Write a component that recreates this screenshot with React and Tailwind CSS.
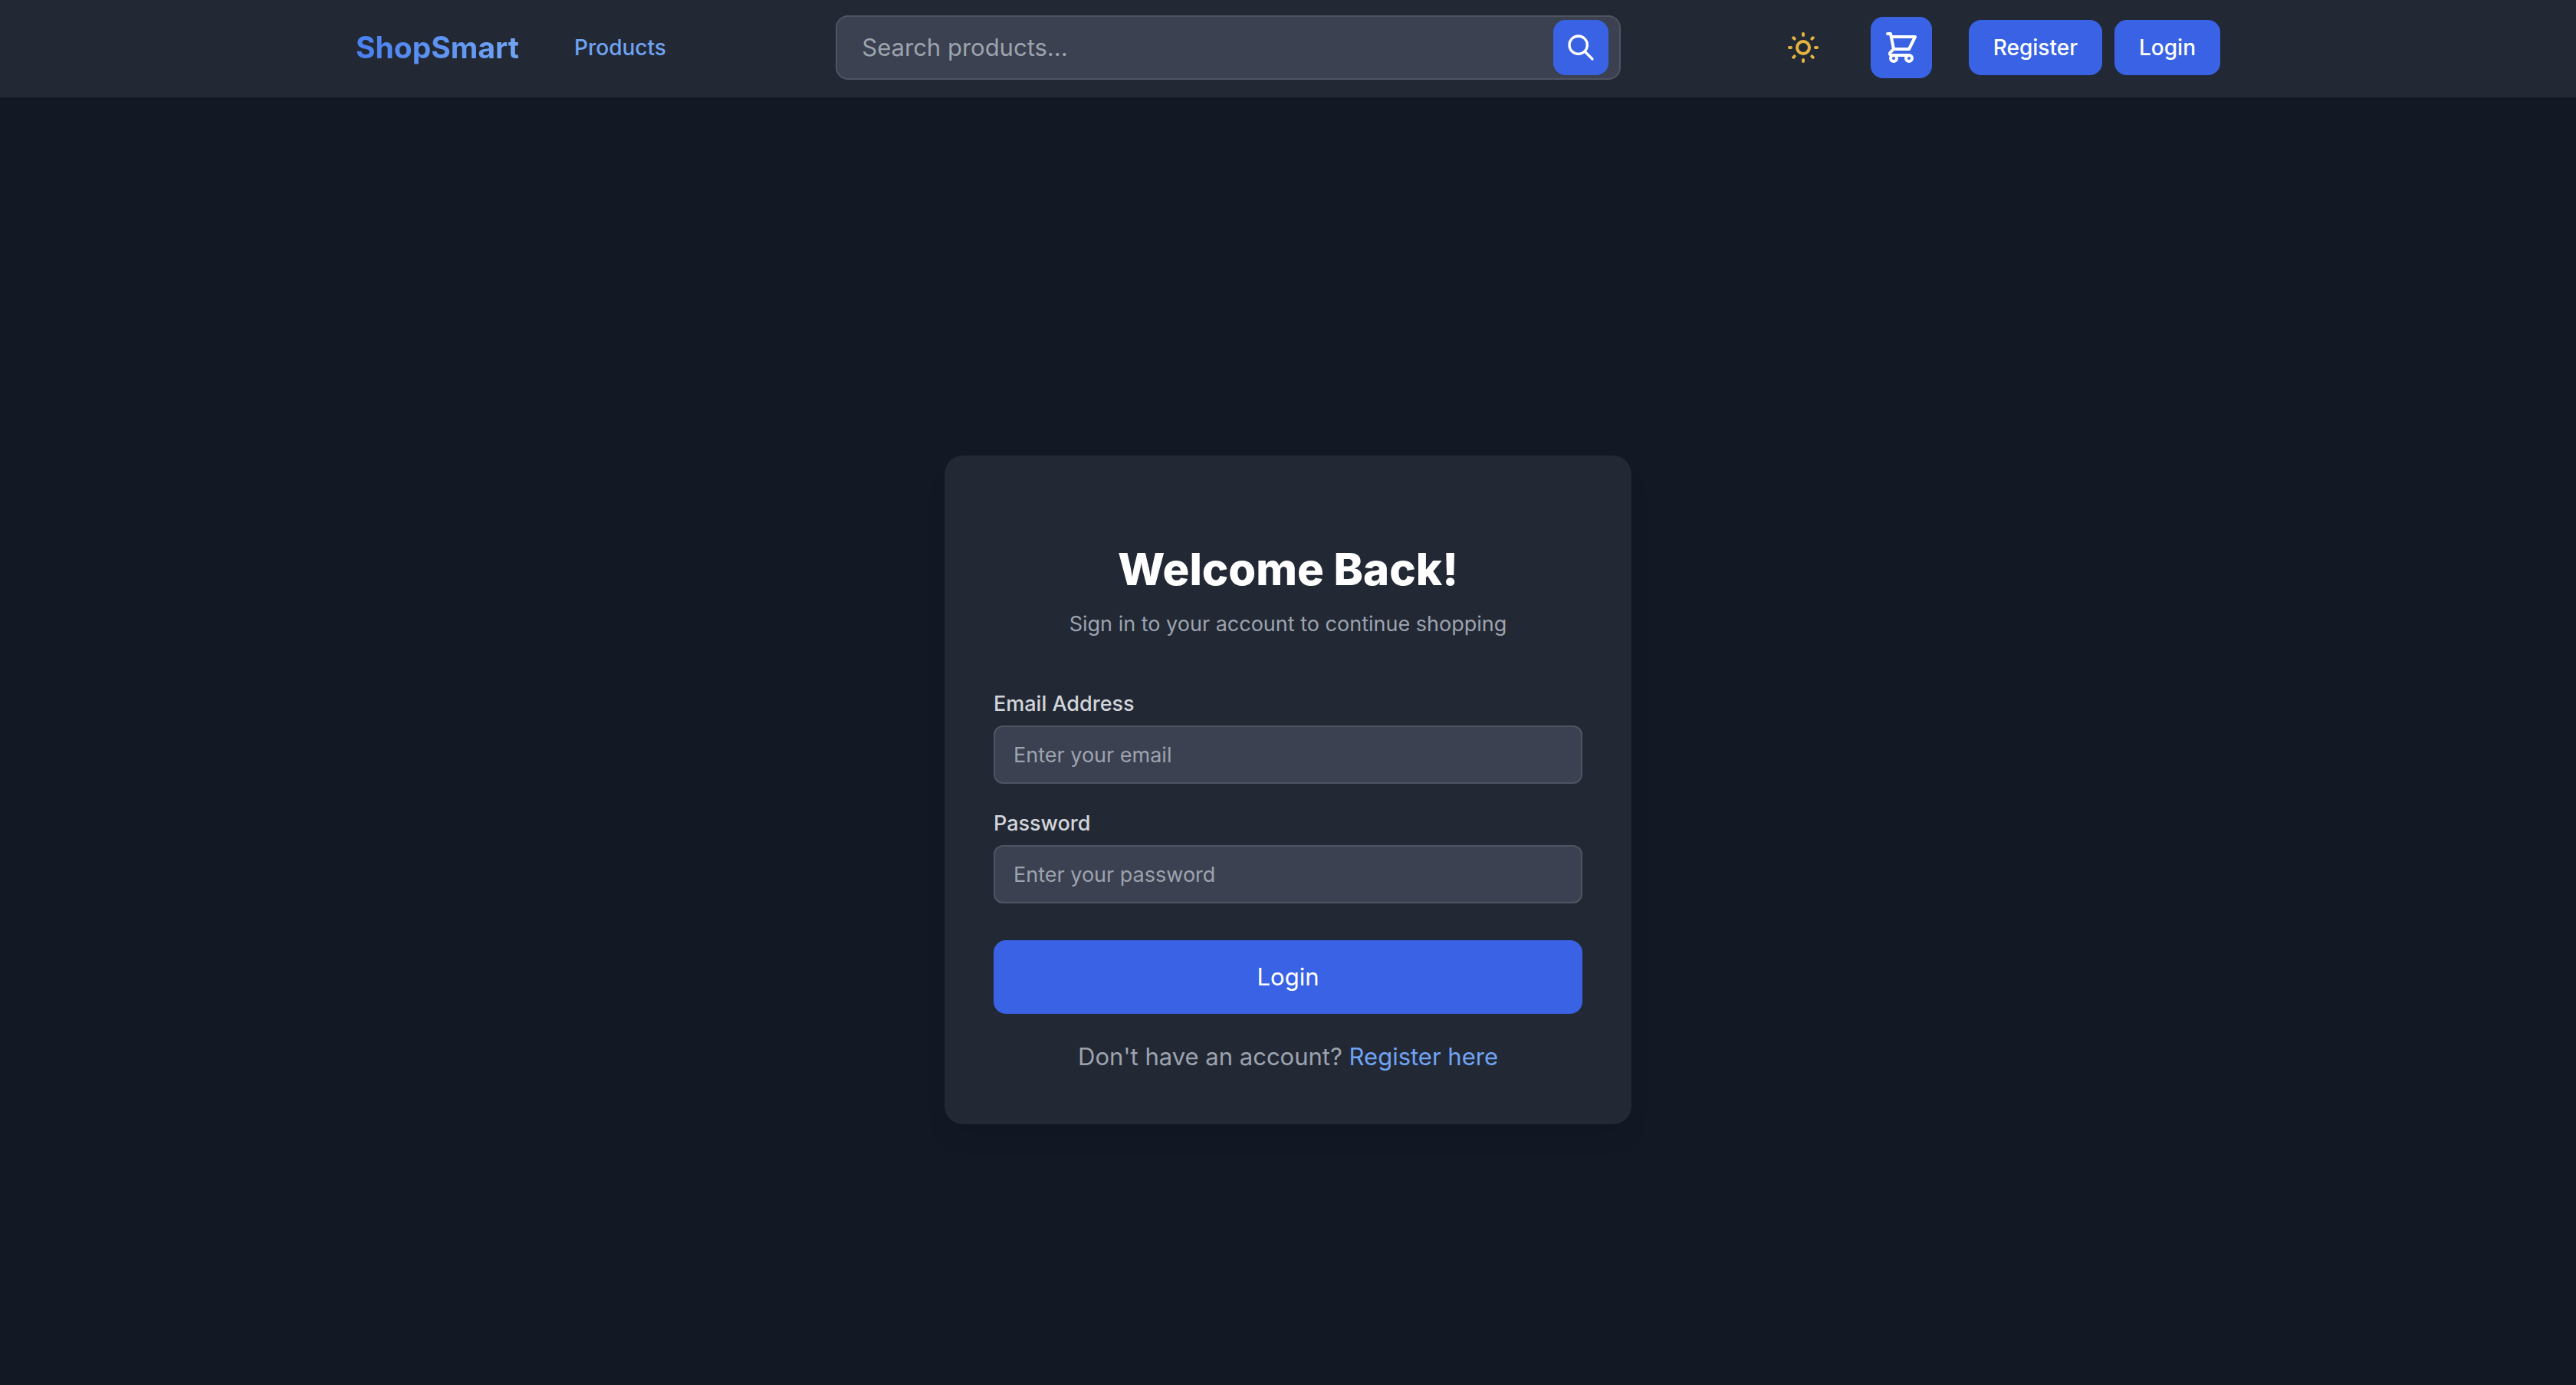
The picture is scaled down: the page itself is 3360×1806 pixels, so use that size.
import React from "react";

const links = [{ label: "Products", href: "#products" }];

function SearchIcon() {
  return (
    <svg className="size-10" viewBox="0 0 24 24" fill="none" stroke="currentColor" strokeWidth="2" strokeLinecap="round" strokeLinejoin="round" aria-hidden="true">
      <path d="M21 21l-6-6m2-5a7 7 0 11-14 0 7 7 0 0114 0z" />
    </svg>
  );
}

function SunIcon() {
  return (
    <svg className="size-12" viewBox="0 0 24 24" fill="none" stroke="currentColor" strokeWidth="2" strokeLinecap="round" strokeLinejoin="round" aria-hidden="true">
      <path d="M12 3v1m0 16v1m9-9h-1M4 12H3m15.364 6.364l-.707-.707M6.343 6.343l-.707-.707m12.728 0l-.707.707M6.343 17.657l-.707.707M16 12a4 4 0 11-8 0 4 4 0 018 0z" />
    </svg>
  );
}

function CartIcon() {
  return (
    <svg className="size-12" viewBox="0 0 24 24" fill="none" stroke="currentColor" strokeWidth="2" strokeLinecap="round" strokeLinejoin="round" aria-hidden="true">
      <path d="M3 3h2l.4 2M7 13h10l4-8H5.4M7 13L5.4 5M7 13l-2.293 2.293c-.63.63-.184 1.707.707 1.707H17m0 0a2 2 0 100 4 2 2 0 000-4zm-8 2a2 2 0 11-4 0 2 2 0 014 0z" />
    </svg>
  );
}

function Header() {
  return (
    <header className="border-b-2 border-[#1b222e] bg-[#222935] shadow-sm">
      <nav className="mx-auto flex max-w-[2560px] items-center justify-between px-16 pt-5 pb-[22px]">
        <div className="flex items-center gap-[72px] pr-6">
          <a href="#home" className="bg-linear-to-r from-[#4a80f0] to-[#72a4f4] bg-clip-text text-[39px] leading-14 font-bold text-transparent">
            ShopSmart
          </a>
          {links.map((link) => (
            <a key={link.label} href={link.href} className="text-[28px] leading-10 font-medium text-[#70a3f3]">
              {link.label}
            </a>
          ))}
        </div>
        <form role="search" className="flex h-21 w-full max-w-5xl items-center rounded-2xl border-2 border-[#4e5461] bg-[#3b4150] pr-3.5 pl-8">
          <input type="search" aria-label="Search products" placeholder="Search products..." className="min-w-0 flex-1 bg-transparent text-[31px] leading-12 text-white outline-none placeholder:text-[#9da3ae]" />
          <button type="button" aria-label="Search" className="flex size-18 items-center justify-center rounded-2xl bg-[#3963e4] text-white">
            <SearchIcon />
          </button>
        </form>
        <div className="flex items-center gap-12">
          <button type="button" aria-label="Switch theme" className="p-4 text-[#e4b43f]">
            <SunIcon />
          </button>
          <a href="#cart" aria-label="Cart" className="rounded-2xl bg-[#3963e4] p-4 text-white">
            <CartIcon />
          </a>
          <div className="flex gap-4 text-[28px] leading-10 font-medium text-white">
            <a href="#register" className="rounded-2xl bg-[#3963e4] px-8 py-4">Register</a>
            <a href="#login" className="rounded-2xl bg-[#3963e4] px-8 py-4">Login</a>
          </div>
        </div>
      </nav>
    </header>
  );
}

function Field({ id, type, label, placeholder }) {
  return (
    <div className="flex flex-col gap-2">
      <label htmlFor={id} className="text-[27px] leading-10 font-medium text-[#d3d5da]">{label}</label>
      <input id={id} type={type} placeholder={placeholder} className="h-19 rounded-xl border-2 border-[#4e5461] bg-[#3b4150] px-6 text-[27px] leading-10 text-white outline-none placeholder:text-[#9da3ae]" />
    </div>
  );
}

export default function App() {
  return (
    <div className="flex min-h-screen flex-col bg-[#121925] font-['Inter',sans-serif]">
      <Header />
      <main className="flex flex-1 items-center justify-center pt-[126px]">
        <section className="flex w-full max-w-4xl flex-col rounded-3xl bg-[#222935] px-16 pt-28 pb-16 shadow-[0_20px_30px_-6px_rgba(0,0,0,0.1)]">
          <h1 className="text-center text-[58px] leading-[72px] font-extrabold text-white">Welcome Back!</h1>
          <p className="mt-4 text-center text-[27px] leading-10 text-[#9da3ae]">Sign in to your account to continue shopping</p>
          <form className="mt-16 flex flex-col gap-8">
            <Field id="email" type="email" label="Email Address" placeholder="Enter your email" />
            <Field id="password" type="password" label="Password" placeholder="Enter your password" />
            <button type="button" className="mt-4 rounded-2xl bg-[#3963e4] py-6 text-[31px] leading-12 text-white">Login</button>
          </form>
          <p className="mt-8 text-center text-[31px] leading-12 text-[#9da3ae]">
            Don't have an account? <a href="#register" className="text-[#70a3f3]">Register here</a>
          </p>
        </section>
      </main>
    </div>
  );
}
